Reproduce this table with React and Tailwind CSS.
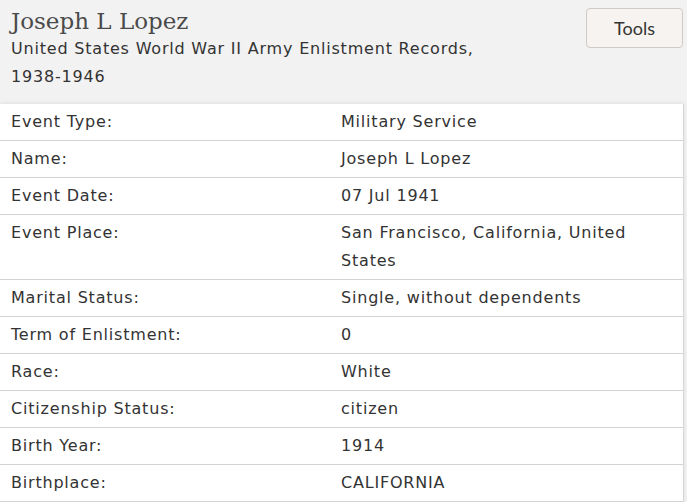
const rows = [
    ['Event Type:', 'Military Service'],
    ['Name:', 'Joseph L Lopez'],
    ['Event Date:', '07 Jul 1941'],
    ['Event Place:', 'San Francisco, California, United States'],
    ['Marital Status:', 'Single, without dependents'],
    ['Term of Enlistment:', '0'],
    ['Race:', 'White'],
    ['Citizenship Status:', 'citizen'],
    ['Birth Year:', '1914'],
    ['Birthplace:', 'CALIFORNIA'],
]

function App() {
    return (
        <div className="w-[687px] h-[502px] overflow-hidden bg-[#f2f2f2] text-[#333] font-['DejaVu_Sans',sans-serif]">
            <div className="flex justify-between pl-[11px] pr-[4px] pt-[7px] pb-[13px]">
                <div className="w-[520px]">
                    <h1 className="text-[23px] leading-[28px] text-[#4a4a4a] font-['DejaVu_Serif',serif]">
                        Joseph L Lopez
                    </h1>
                    <p className="text-[16px] leading-[28px] tracking-[0.8px]">
                        United States World War II Army Enlistment Records, <span className="whitespace-nowrap">1938-1946</span>
                    </p>
                </div>
                <button className="mt-[1px] w-[97px] h-[40px] rounded-[4px] border border-[#cfcac5] bg-[#f6f3f0] text-[18px] text-[#333] font-['Lato',sans-serif]">
                    Tools
                </button>
            </div>

            <div className="w-[684px] bg-white border-r border-[#d6d6d6] shadow-[0_-1px_4px_rgba(0,0,0,0.08)]">
                {rows.map(([label, value]) => (
                    <div key={label} className="grid grid-cols-[331px_1fr] border-b border-[#d2d2d2] text-[16px] leading-[28px] tracking-[0.8px]">
                        <div className="pl-[11px] py-[4px]">{label}</div>
                        <div className="pl-[10px] pr-[30px] py-[4px]">{value}</div>
                    </div>
                ))}
            </div>
        </div>
    )
}

export default App
